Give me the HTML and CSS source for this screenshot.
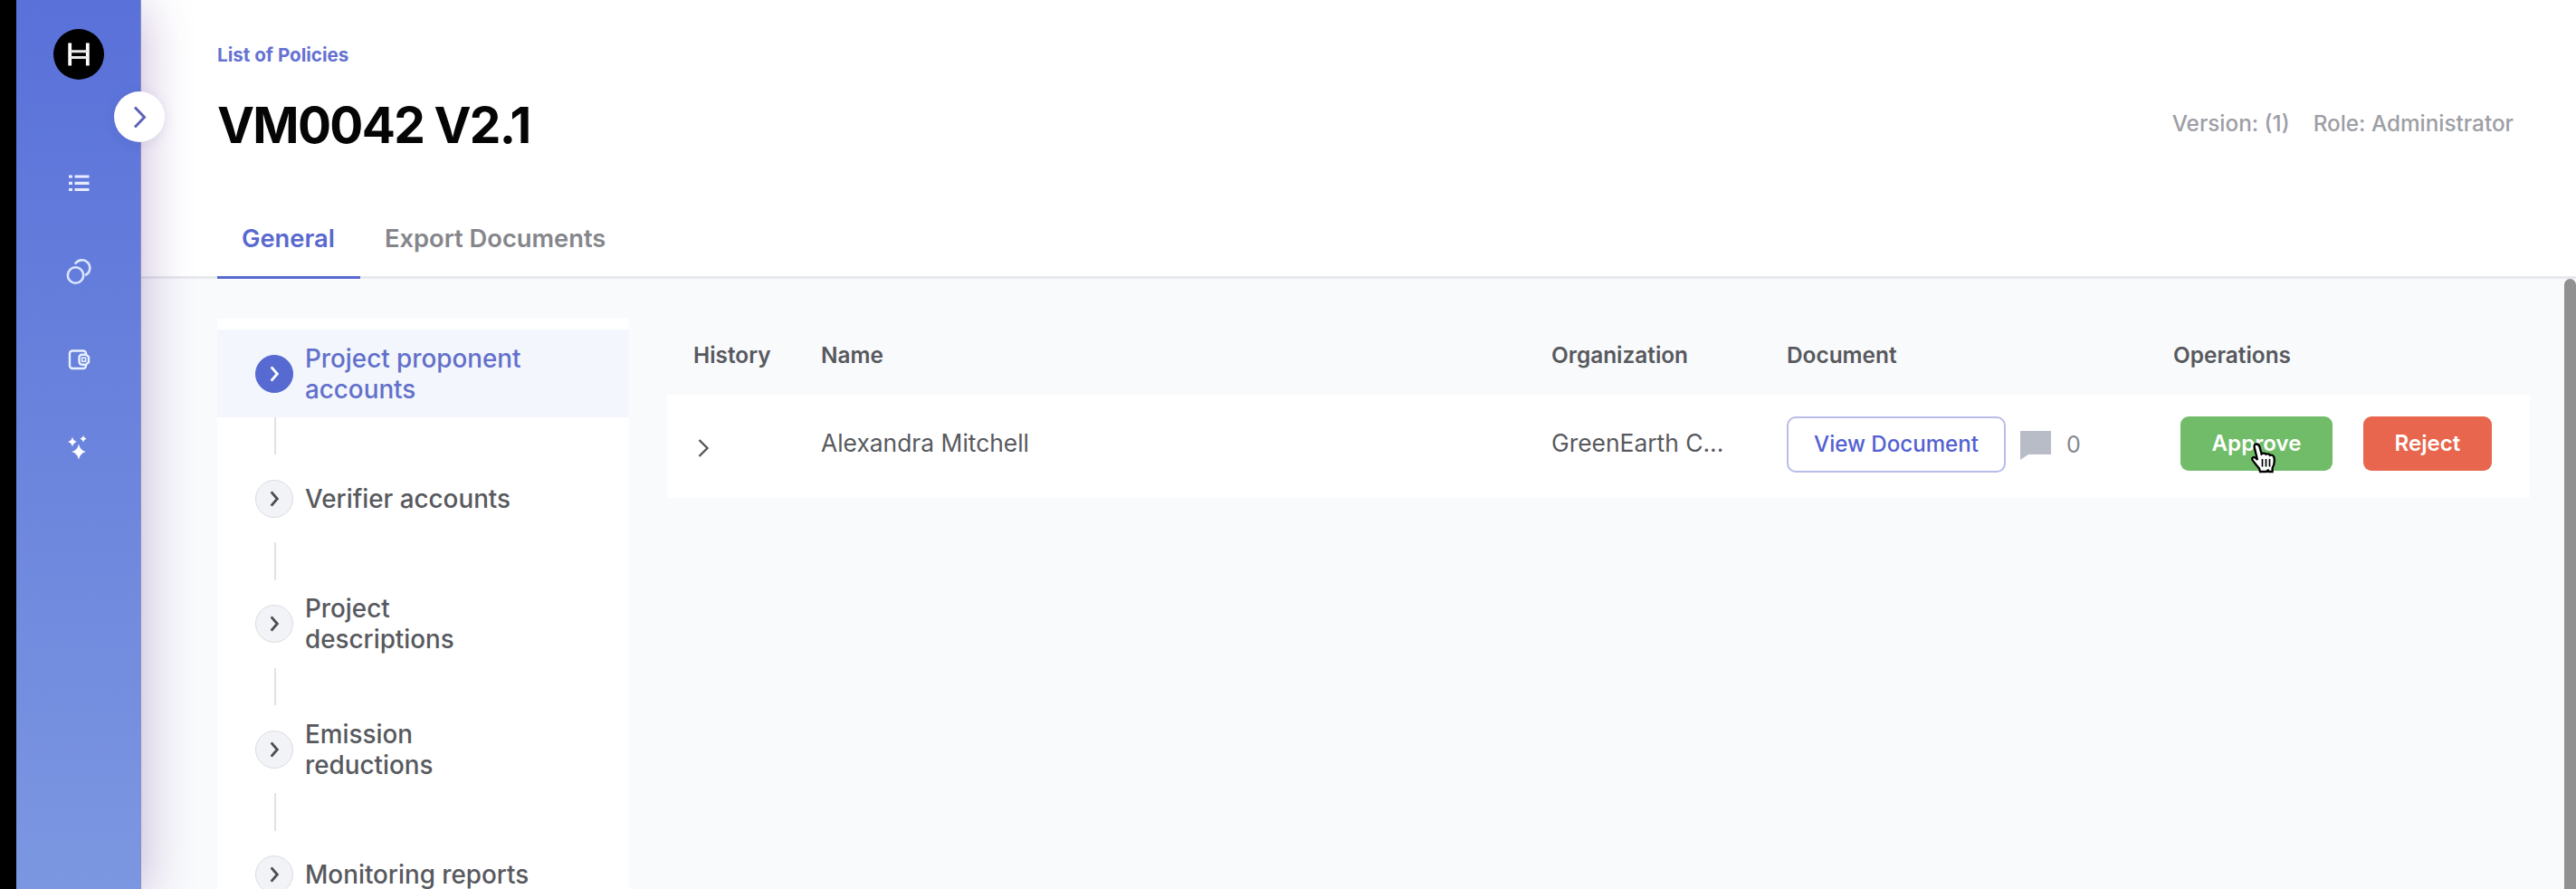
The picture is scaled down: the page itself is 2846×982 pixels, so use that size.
FILE: index.html
```
<!DOCTYPE html>
<html lang="en">
<head>
<meta charset="utf-8">
<title>VM0042 V2.1</title>
<link rel="stylesheet" href="styles.css">
</head>
<body>
<div class="app">
  <aside class="sidebar">
    <svg class="logo" viewBox="0 0 56 56"><circle cx="28" cy="28" r="28" fill="#000"/><path d="M18.2 15.5v25M37.8 15.5v25" stroke="#fff" stroke-width="3.8"/><path d="M18 24.8h20M18 31.5h20" stroke="#e8e8e8" stroke-width="3"/></svg>
    <nav class="nav">
      <svg class="nav-icon" viewBox="0 0 32 32"><path d="M5 8h4M5 15.300h4M5 22.500h4M11.500 8h16M11.500 15.300h16M11.500 22.500h16" stroke="#e6ebff" stroke-width="3.200"/></svg>
      <svg class="nav-icon" viewBox="0 0 32 32" fill="none" stroke="#dbe6ff" stroke-width="2.600"><circle cx="12.500" cy="20" r="8.700"/><path d="M12 7.700A8.700 8.700 0 1 1 23 20"/></svg>
      <svg class="nav-icon" viewBox="0 0 32 32" fill="none" stroke="#e8f0ff" stroke-width="2.400"><path d="M24 11V9.500a3 3 0 0 0-3-3H9a3 3 0 0 0-3 3v13.500a3 3 0 0 0 3 3h12a3 3 0 0 0 3-3V21"/><path d="M19.500 10.700h4.500l3 2.500v6l-3 2.500h-4.500a3 3 0 0 1-3-3v-5a3 3 0 0 1 3-3z"/><rect x="19.600" y="14.200" width="4" height="4" stroke-width="1.600"/></svg>
      <svg class="nav-icon" viewBox="0 0 32 32" fill="#fff"><path d="M16 12.500q1.500 7 8 8.500-6.500 1.500-8 8.500-1.500-7-8-8.500 6.500-1.500 8-8.500zM9 4.500q1 4.500 5 5.500-4 1-5 5.500-1-4.500-5-5.500 4-1 5-5.500zM21 3q.7 3 3.500 3.700-2.800.7-3.500 3.700-.7-3-3.500-3.700 2.800-.7 3.500-3.700z"/></svg>
    </nav>
    <button class="toggle" aria-label="Expand menu"><svg viewBox="0 0 56 56"><path d="M23 17.500l10.500 11L23 39.500" fill="none" stroke="#5c63b8" stroke-width="3"/></svg></button>
  </aside>

  <main class="main">
    <header class="header">
      <a class="crumb">List of Policies</a>
      <div class="title-row">
        <h1 class="title">VM0042 V2.1</h1>
        <div class="meta"><span>Version: (1)</span><span>Role: Administrator</span></div>
      </div>
      <div class="tabs">
        <a class="tab tab-active">General</a>
        <a class="tab">Export Documents</a>
      </div>
    </header>

    <div class="content">
      <ol class="steps">
        <li class="step step-active"><span class="step-dot"><svg viewBox="0 0 42 42"><path d="M17.500 13l7 8-7 8"/></svg></span><span class="step-label">Project proponent<br>accounts</span></li>
        <li class="connector"></li>
        <li class="step"><span class="step-dot"><svg viewBox="0 0 42 42"><path d="M17.500 13l7 8-7 8"/></svg></span><span class="step-label">Verifier accounts</span></li>
        <li class="connector"></li>
        <li class="step"><span class="step-dot"><svg viewBox="0 0 42 42"><path d="M17.500 13l7 8-7 8"/></svg></span><span class="step-label">Project<br>descriptions</span></li>
        <li class="connector"></li>
        <li class="step"><span class="step-dot"><svg viewBox="0 0 42 42"><path d="M17.500 13l7 8-7 8"/></svg></span><span class="step-label">Emission<br>reductions</span></li>
        <li class="connector"></li>
        <li class="step"><span class="step-dot"><svg viewBox="0 0 42 42"><path d="M17.500 13l7 8-7 8"/></svg></span><span class="step-label">Monitoring reports</span></li>
      </ol>

      <section class="table">
        <div class="row row-head">
          <span>History</span><span>Name</span><span>Organization</span><span>Document</span><span>Operations</span>
        </div>
        <div class="row row-body">
          <span class="expand"><svg viewBox="0 0 16 22"><path d="M2.500 2l9 9-9 9" fill="none" stroke="#55575c" stroke-width="2.400"/></svg></span>
          <span class="cell-text">Alexandra Mitchell</span>
          <span class="cell-text">GreenEarth C...</span>
          <span class="doc">
            <button class="btn btn-view">View Document</button>
            <svg class="comment" viewBox="0 0 34 32"><path d="M0 0h34v26H9l-9 6z" fill="#b8bcc7"/></svg>
            <span class="count">0</span>
          </span>
          <span class="ops">
            <button class="btn btn-approve">Approve
              <svg class="cursor" viewBox="0 0 32 36"><path d="M8 2.500c2 0 3 1.300 3.600 3.500l2 7.500c2-1.600 4-1 4.800.300 1.800-1 3.800-.3 4.400 1.100 2-.8 4 .300 4.600 2.300.900 4.500.600 7.800-1.800 11.800v4h-3.800l-1-1.500-2 1.500H12l-1-3.500c-2-3-5-5.500-7.500-9.500-1-2.500 1.500-4 4-1.800L9 20 5.700 6C5.200 4 6 2.500 8 2.500z" fill="#fff" stroke="#000" stroke-width="2.300"/><path d="M14.500 19v8.500M18.500 19v8.500M22.500 19v8.500" stroke="#000" stroke-width="1.700"/></svg>
            </button>
            <button class="btn btn-reject">Reject</button>
          </span>
        </div>
      </section>
      <div class="scrollbar"></div>
    </div>
  </main>
</div>
</body>
</html>
```
FILE: styles.css
```
* { box-sizing: border-box; }
body { margin: 0; background: #000; font-family: Inter, "Liberation Sans", sans-serif; color: #57595e; }
svg { display: block; }
button { font-family: inherit; border: 0; padding: 0; }

.app { display: flex; height: 982px; padding-left: 18px; overflow: hidden; }

/* Sidebar */
.sidebar {
  position: relative; z-index: 1; flex: none; width: 138px; padding-top: 32px;
  display: flex; flex-direction: column; align-items: center;
  background: linear-gradient(#5971d9, #7c97e1);
  border-right: 1px solid #8b8fbd;
  box-shadow: 2px 8px 56px rgba(70, 20, 130, .3);
  clip-path: inset(0 -80px 0 0);
}
.logo { width: 56px; height: 56px; }
.nav { display: flex; flex-direction: column; align-items: center; gap: 65px; margin-top: 99px; }
.nav-icon { width: 32px; height: 32px; }
.toggle { position: absolute; left: 108px; top: 101px; width: 56px; height: 56px; border-radius: 50%; background: #fff; box-shadow: 0 2px 14px rgba(60, 30, 120, .1); }

/* Header */
.main { flex: 1; min-width: 0; display: flex; flex-direction: column; background: #f9fafc; }
.header { height: 308px; padding: 46px 69px 0 84px; display: flex; flex-direction: column; background: #fff; border-bottom: 3px solid #e7e9ed; }
.crumb { font-size: 20.6px; line-height: 30px; font-weight: 700; color: #6572d2; }
.title-row { display: flex; justify-content: space-between; align-items: center; height: 70px; margin-top: 27px; }
.title { margin: 0; font-size: 55px; line-height: 70px; font-weight: 650; letter-spacing: -1.7px; color: #050505; }
.meta { display: flex; gap: 26px; font-size: 24.3px; line-height: 30px; font-weight: 500; color: #9d9ea5; padding-bottom: 4px; }
.tabs { display: flex; margin-top: 51px; height: 84px; }
.tab { padding: 0 27px; height: 84px; line-height: 80px; font-size: 27.300px; font-weight: 600; color: #85868b; }
.tab-active { width: 158px; color: #5968cf; border-bottom: 3px solid #5968cf; }

/* Content */
.content { flex: 1; display: flex; align-items: flex-start; min-height: 0; }
.steps { list-style: none; flex: none; width: 455px; margin: 44px 42px 0 84px; padding: 12px 0 40px; background: #fff; }
.step { display: flex; align-items: center; height: 97px; padding-left: 42px; }
.step-dot { width: 42px; height: 42px; border-radius: 50%; background: #f2f3f6; border: 1px solid #dcdde2; }
.step-dot svg { width: 40px; height: 40px; fill: none; stroke: #4c4e54; stroke-width: 3; }
.step-label { margin-left: 13px; font-size: 27.8px; line-height: 34px; font-weight: 500; }
.step-active { background: #f3f6fc; color: #6270cb; }
.step-active .step-dot { background: #566ad2; border-color: #566ad2; }
.step-active .step-dot svg { stroke: #fff; }
.connector { width: 1.500px; height: 41.400px; margin-left: 63px; background: #e1e2e8; }

/* Table */
.table { flex: 1; margin-top: 41px; }
.row { display: grid; grid-template-columns: 141px 807px 260px 427px 1fr; padding-left: 29px; align-items: center; }
.row-head { height: 87px; font-size: 24.4px; line-height: 30px; font-weight: 600; }
.row-head span { padding-bottom: 1px; }
.row-body { height: 114px; background: #fff; }
.expand svg { width: 16px; height: 22px; margin: 4px 0 0 4px; }
.cell-text { font-size: 26.400px; line-height: 32px; padding-bottom: 9px; }
.doc { display: flex; align-items: center; padding-bottom: 4px; }
.btn { height: 60px; border-radius: 9px; font-size: 24.1px; font-weight: 500; line-height: 60px; color: #fff; }
.btn-view { width: 242px; height: 62px; line-height: 58px; background: #fff; border: 2px solid #b9bbe8; border-radius: 10px; color: #5361d2; }
.comment { width: 34px; height: 32px; margin: 2px 0 0 16px; }
.count { margin-left: 17px; font-size: 25px; color: #85878d; }
.ops { display: flex; gap: 34px; padding: 0 0 6px 8px; white-space: nowrap; }
.btn-approve { position: relative; width: 168px; background: #71bc68; font-weight: 600; }
.btn-reject { width: 142px; background: #e7664d; font-weight: 600; }
.cursor { position: absolute; left: 76px; top: 28px; width: 32px; height: 36px; }
.scrollbar { flex: none; align-self: stretch; width: 13px; margin-left: 38px; border-radius: 7px 7px 0 0; background: #919192; }
```
